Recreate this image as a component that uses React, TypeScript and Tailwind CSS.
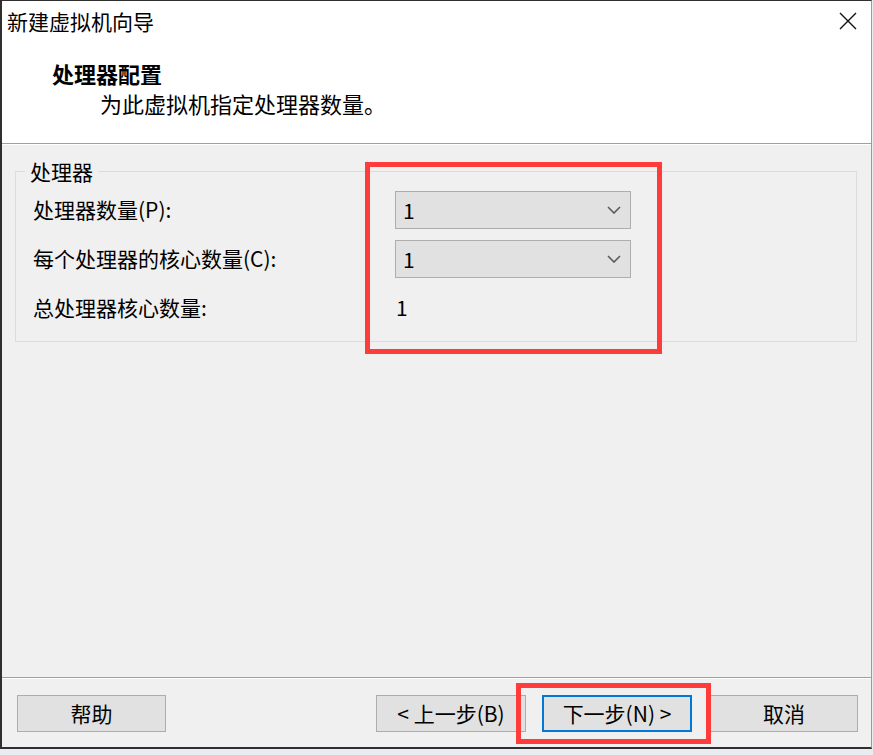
import React from "react";

const FONT = { fontFamily: '"Noto Sans CJK SC", "Noto Sans", sans-serif' };

function Chevron() {
  return (
    <svg width="14" height="8" viewBox="0 0 14 8" className="shrink-0">
      <path d="M1 1 L7 7 L13 1" fill="none" stroke="#5a5a5a" strokeWidth="1.6" />
    </svg>
  );
}

function Select({ value }: { value: string }) {
  return (
    <div className="w-[236px] h-[38px] bg-[#e1e1e1] border border-[#adadad] flex items-center justify-between pl-[7px] pr-[9px]">
      <span className="text-[21px] leading-none text-black">{value}</span>
      <Chevron />
    </div>
  );
}

function Btn({ children, primary, w }: { children: React.ReactNode; primary?: boolean; w: string }) {
  return (
    <div
      className={
        "h-[37px] bg-[#e1e1e1] flex items-center justify-center text-[21px] text-black " +
        w +
        (primary ? " border-2 border-[#0078d7]" : " border border-[#adadad]")
      }
    >
      {children}
    </div>
  );
}

export default function App() {
  return (
    <div className="relative w-[873px] h-[755px] bg-[#e9edf1] overflow-hidden" style={FONT}>
      <div className="w-[872px] h-[749px] flex flex-col border-l-2 border-t border-b-2 border-r border-l-[#2f2f2f] border-t-[#2f2f2f] border-b-[#2f2f2f] border-r-[#9a9a9a] bg-[#f0f0f0]">
        {/* header */}
        <div className="bg-white h-[143px] shrink-0 flex flex-col border-b border-[#a0a0a0]">
          <div className="h-[40px] flex items-center justify-between pl-[5px] pr-[14px]">
            <span className="text-[21px] leading-none text-black">新建虚拟机向导</span>
            <svg width="18" height="18" viewBox="0 0 18 18">
              <path d="M1 1 L17 17 M17 1 L1 17" stroke="#111" strokeWidth="1.4" />
            </svg>
          </div>
          <div className="pt-[17px] pl-[50px] text-[22px] leading-[30px] font-bold text-black">处理器配置</div>
          <div className="pl-[98px] text-[22px] leading-[30px] text-black">为此虚拟机指定处理器数量。</div>
        </div>

        {/* body */}
        <div className="flex-1 flex flex-col border-t border-white">
          <fieldset className="ml-[13px] mr-[14px] mt-[12px] border border-[#dcdcdc]">
            <legend className="ml-[9px] px-[5px] text-[21px] leading-[28px] text-black">处理器</legend>
            <div className="pl-[17px] pt-[6px] pb-[14px] flex flex-col gap-[11px] text-[21px] text-black">
              <div className="flex items-center h-[38px]">
                <div className="w-[362px]">处理器数量(P):</div>
                <Select value="1" />
              </div>
              <div className="flex items-center h-[38px]">
                <div className="w-[362px]">每个处理器的核心数量(C):</div>
                <Select value="1" />
              </div>
              <div className="flex items-center h-[38px]">
                <div className="w-[362px]">总处理器核心数量:</div>
                <div className="pl-[1px]">1</div>
              </div>
            </div>
          </fieldset>
        </div>

        {/* footer */}
        <div className="h-[70px] shrink-0 border-t border-[#a0a0a0] flex flex-col">
          <div className="border-t border-white flex-1 flex items-start pt-[16px] pl-[15px] pr-[13px]">
            <Btn w="w-[149px]">帮助</Btn>
            <div className="flex-1" />
            <Btn w="w-[150px]">&lt; 上一步(B)</Btn>
            <div className="w-[16px]" />
            <Btn w="w-[150px]" primary>下一步(N) &gt;</Btn>
            <div className="w-[18px]" />
            <Btn w="w-[148px]">取消</Btn>
          </div>
        </div>
      </div>

      {/* red annotation boxes */}
      <div className="absolute left-[365px] top-[162px] w-[297px] h-[192px] border-[5px] border-[#ff3b3b]" />
      <div className="absolute left-[516px] top-[683px] w-[195px] h-[61px] border-[5px] border-[#ff3b3b]" />
    </div>
  );
}
